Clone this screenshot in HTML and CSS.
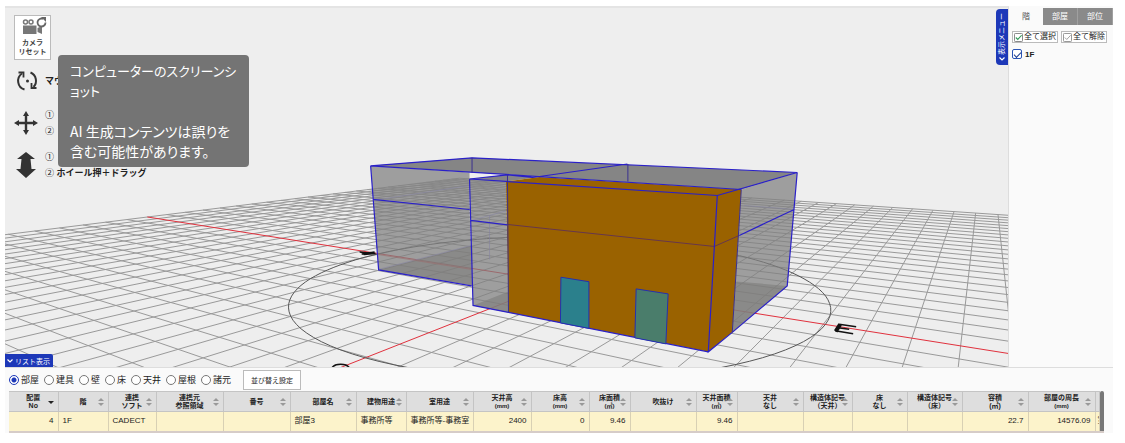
FILE: index.html
```
<!DOCTYPE html>
<html lang="ja">
<head>
<meta charset="utf-8">
<title>3Dビュー</title>
<link rel="stylesheet" href="styles.css">
</head>
<body>
<div class="app">
  <div class="workspace">
    <main class="viewport">
      <svg class="scene" viewBox="5 8 1004 360" preserveAspectRatio="xMidYMid slice" role="img" aria-label="建物の3D表示">
        <g id="grid" class="grid"></g>
        <g id="axes" class="axes"></g>
        <path id="compass" class="compass"></path>
        <path class="mark" d="M360 252.500L372 254M362 254.500L375 252.500M364 255L376 254"/>
        <path class="mark" d="M332 369Q334 365 341 365T350 369"/>
        <path class="mark" d="M857 327.500L840 325M854 334.500L836 331.500"/>
        <path class="mark mark-bold" d="M841 325L836.500 332"/>
        <path class="mark" d="M839 328.500L850 330"/>
        <path class="floor" d="M379 270.500L473 246L473 286ZM473.500 306L509 292V313ZM737 282L788 286.500L733 333Z"/>
        <path class="wall" d="M371 166.300L470 173V210L473 286L379 270.500Z"/>
        <path class="wall" d="M470 179.500L506.500 181.500L509 313L473.500 306Z"/>
        <path class="wall" d="M742 190L798 173L788 286.500L733 333Z"/>
        <path class="rim" d="M371 166.300L472.500 158.300L798 173L742 190Z"/>
        <path class="rim" d="M470 179.500L508 175.300L540 177.500L506.500 182Z"/>
        <path class="faint" d="M373 201L470 186M472 221L508 211M745 206L795 210M490 216V260M379 270L472 246"/>
        <path class="faint-axis" d="M378 255L472 270"/>
        <path class="orange" d="M506.500 182L540 177.500L742 190L733 333L709 352.500L509 313Z"/>
        <path class="orange-line" d="M508 225L550 229.500L715 247L740 236"/>
        <path class="edge" d="M371 166.300L472.500 158.300L798 173L718 196L470 179.500L508 175.300L533 178L628 164.500M371 166.300L742 190M371 166.300L379 270.500L472 286.500M470 179.500L473.500 306L509 313M373 199.800L470 210M471 221L508 225.500M798 173L788 286.500L733 333M740 236L795 210M718 196L709 352.500L733 333M709 352.500L509 313"/>
        <path class="inner-edge" d="M472.500 158.300V173M628.500 164.500V182M508 175.300V182L509 313M742 190L733 333"/>
        <path class="window-a" d="M561.500 277.800L589.500 282.300V329L561 323.500Z"/>
        <path class="window-b" d="M636.800 289.500L668.800 294.500L666.500 344.500L635.500 338.500Z"/>
      </svg>

      <div class="tools">
        <button class="camera" type="button">
          <svg viewBox="0 0 28 18" width="28" height="18" aria-hidden="true">
            <circle cx="6.500" cy="5" r="2" fill="none" stroke="#777" stroke-width="1.500"/>
            <circle cx="12" cy="5" r="2" fill="none" stroke="#777" stroke-width="1.500"/>
            <path d="M4 8.500H17.500V17H4ZM18.500 11L23 9V17L18.500 15Z" fill="#777"/>
            <path d="M24 1.800A4 4 0 1 0 26.500 5.500" fill="none" stroke="#666" stroke-width="1.800"/>
            <path d="M22 0H27V5Z" fill="#666"/>
          </svg>
          <span>カメラ</span><span>リセット</span>
        </button>
        <ul class="hints">
          <li>
            <svg viewBox="0 0 24 24" width="24" height="24" aria-hidden="true">
              <path d="M10.500 20.500A9 9 0 0 1 8 4.500M16.500 3.500A9 9 0 0 1 19.500 18" fill="none" stroke="#333" stroke-width="2"/>
              <path d="M4.500 3.500H9.500V8.500M22.500 19H17.500V14" fill="none" stroke="#333" stroke-width="1.800"/>
              <circle cx="13.500" cy="12" r="1.500" fill="#333"/>
            </svg>
            <p>マウ</p>
          </li>
          <li>
            <svg viewBox="0 0 24 24" width="24" height="24" aria-hidden="true">
              <path d="M12 3V21M3 12H21" stroke="#333" stroke-width="2.400"/>
              <path d="M12 0L15 5H9ZM12 24L9 19H15ZM0 12L5 9V15ZM24 12L19 15V9Z" fill="#333"/>
            </svg>
            <p><i>①</i><br><i>②</i></p>
          </li>
          <li>
            <svg viewBox="0 0 24 28" width="24" height="28" aria-hidden="true">
              <path d="M12 1L21 8H16.500L17.500 18H22L12 27L2 18H6.500L7.500 8H3Z" fill="#333"/>
            </svg>
            <p><i>①</i><br><i>②</i> ホイール押＋ドラッグ</p>
          </li>
        </ul>
      </div>

      <div class="tooltip" role="tooltip">
        <p class="tip-title">コンピューターのスクリーンシ<br>ョット</p>
        <p>AI 生成コンテンツは誤りを<br>含む可能性があります。</p>
      </div>
      <button class="menu-toggle" type="button">
        <svg viewBox="0 0 6 4" width="6" height="4" aria-hidden="true"><path d="M.5 3.500L3 1L5.500 3.500" fill="none" stroke="#fff" stroke-width="1.200"/></svg>
        <span>表示メニュー</span>
      </button>
      <button class="list-toggle" type="button">
        <svg viewBox="0 0 6 4" width="6" height="4" aria-hidden="true"><path d="M.5 .5L3 3L5.500 .5" fill="none" stroke="#fff" stroke-width="1.200"/></svg>
        リスト表示
      </button>
    </main>

    <aside class="side">
      <nav class="tabs">
        <button class="tab active" type="button">階</button>
        <button class="tab" type="button">部屋</button>
        <button class="tab" type="button">部位</button>
      </nav>
      <div class="side-actions">
        <button type="button">
          <svg viewBox="0 0 10 10" width="9" height="9" aria-hidden="true"><rect x=".5" y=".5" width="9" height="9" rx="1" fill="#fff" stroke="#777"/><path d="M2 5L4.200 7.200L8.500 2.500" fill="none" stroke="#2f9a55" stroke-width="1.200"/></svg>全て選択
        </button>
        <button type="button">
          <svg viewBox="0 0 10 10" width="9" height="9" aria-hidden="true"><rect x=".5" y=".5" width="9" height="9" rx="1" fill="#fff" stroke="#888"/><path d="M2 5L4.200 7.200L8.500 2.500" fill="none" stroke="#999"/></svg>全て解除
        </button>
      </div>
      <label class="floor-check"><input type="checkbox" checked><span>1F</span></label>
    </aside>
  </div>

  <section class="list">
    <form class="filters">
      <label><input type="radio" name="kind" checked>部屋</label>
      <label><input type="radio" name="kind">建具</label>
      <label><input type="radio" name="kind">壁</label>
      <label><input type="radio" name="kind">床</label>
      <label><input type="radio" name="kind">天井</label>
      <label><input type="radio" name="kind">屋根</label>
      <label><input type="radio" name="kind">諸元</label>
      <button type="button">並び替え設定</button>
    </form>
    <div class="table-wrap">
      <table>
        <colgroup>
          <col class="w49"><col class="w50"><col class="w48"><col class="w67"><col class="w67"><col class="w66"><col class="w50"><col class="w67"><col class="w58"><col class="w58"><col class="w41"><col class="w66"><col class="w41"><col class="w66"><col class="w49"><col class="w55"><col class="w55"><col class="w66"><col class="w67"><col>
        </colgroup>
        <thead>
          <tr>
            <th class="sorted">配置<br>No</th><th>階</th><th>連携<br>ソフト</th><th>連携元<br>参照領域</th><th>番号</th><th>部屋名</th><th>建物用途</th><th>室用途</th><th>天井高<br><small>(mm)</small></th><th>床高<br><small>(mm)</small></th><th>床面積<br><small>(㎡)</small></th><th>吹抜け</th><th>天井面積<br><small>(㎡)</small></th><th>天井<br>なし</th><th>構造体記号<br>（天井）</th><th>床<br>なし</th><th>構造体記号<br>（床）</th><th>容積<br>(㎥)</th><th>部屋の周長<br><small>(mm)</small></th><th class="cut"></th>
          </tr>
        </thead>
        <tbody>
          <tr>
            <td class="num">4</td><td>1F</td><td>CADECT</td><td></td><td></td><td>部屋3</td><td>事務所等</td><td>事務所等-事務室</td><td class="num">2400</td><td class="num">0</td><td class="num">9.46</td><td></td><td class="num">9.46</td><td></td><td></td><td></td><td></td><td class="num">22.7</td><td class="num">14576.09</td><td>室</td>
          </tr>
        </tbody>
      </table>
      <div class="scrollbar"></div>
    </div>
  </section>
</div>
<script src="scene.js"></script>
</body>
</html>
```
FILE: styles.css
```
* { box-sizing: border-box; }
body {
  margin: 0;
  background: #fff;
  color: #222;
  font-family: "Liberation Sans", "Noto Sans CJK JP", sans-serif;
}
button, input { font: inherit; color: inherit; margin: 0; }
p, ul { margin: 0; padding: 0; }
ul { list-style: none; }

.app { margin: 6px 12px 0 5px; }
.workspace { display: flex; height: 362px; border-bottom: 1px solid #ddd; }
.viewport {
  position: relative;
  flex: 1;
  min-width: 0;
  overflow: hidden;
  background: #eee;
  border-top: 2px solid #e4e4e4;
  border-right: 1px solid #ddd;
}
.scene { position: absolute; inset: 0; width: 100%; height: 100%; }
.scene path, .scene line { fill: none; }
.grid line { stroke: #999; stroke-width: 1; }
.axes line { stroke: #e0303c; stroke-width: 1; }
.compass { stroke: #555; }
.mark { stroke: #111; stroke-width: 1.500; }
.scene .mark-bold { stroke-width: 4; }
.scene .floor { fill: #77736c; fill-opacity: .6; }
.scene .wall { fill: #808080; fill-opacity: .72; }
.scene .rim { fill: #858585; }
.faint { stroke: #8583a0; stroke-width: 1; stroke-opacity: .6; }
.faint-axis { stroke: #9a6c6c; stroke-opacity: .6; }
.scene .orange { fill: #9a6200; }
.orange-line { stroke: #66364c; }
.edge { stroke: #2a20c8; stroke-width: 1.200; }
.inner-edge { stroke: #3a3090; }
.scene .window-a { fill: #2b808c; stroke: #2430b0; }
.scene .window-b { fill: #4a7d6b; stroke: #2430b0; }

.tools { position: relative; padding: 7px 0 0 9px; }
.camera {
  display: flex;
  flex-direction: column;
  align-items: center;
  width: 37px;
  height: 45px;
  padding: 1px 0 0;
  border: 1px solid #bbb;
  background: #fff;
  color: #444;
  font-size: 7px;
  font-weight: 700;
  line-height: 9px;
}
.camera svg { margin-bottom: 3px; }
.hints { display: grid; gap: 8px; margin-top: 4px; }
.hints li { display: flex; align-items: center; gap: 7px; height: 34px; }
.hints li svg { flex: none; }
.hints p { font-size: 9px; line-height: 16px; font-weight: 700; white-space: nowrap; }
.hints i { font-style: normal; font-weight: 400; }

.tooltip {
  position: absolute;
  left: 53px;
  top: 47px;
  width: 191px;
  padding: 6px 10px 6px 12px;
  border-radius: 4px;
  background: #747474;
  color: #fff;
  font-family: "Noto Sans CJK JP", sans-serif;
  font-size: 14px;
  line-height: 20px;
  font-feature-settings: "palt";
  white-space: nowrap;
}
.tooltip .tip-title { font-size: 13px; }
.tooltip p + p { margin-top: 20px; }

.menu-toggle {
  position: absolute;
  right: 0;
  top: 1px;
  display: flex;
  flex-direction: column-reverse;
  align-items: center;
  justify-content: center;
  gap: 2px;
  width: 12px;
  height: 56px;
  padding: 0;
  border: 0;
  border-radius: 4px 0 0 4px;
  background: #1d38b8;
  color: #fff;
  font-size: 7px;
  line-height: 12px;
}
.menu-toggle svg { transform: rotate(180deg); }
.menu-toggle span {
  display: block;
  writing-mode: vertical-rl;
  text-orientation: sideways;
  transform: rotate(180deg);
  white-space: nowrap;
}
.list-toggle {
  position: absolute;
  left: 0;
  bottom: 0;
  display: flex;
  align-items: center;
  gap: 2px;
  height: 13px;
  padding: 0 3px 0 2px;
  border: 0;
  border-radius: 0 2px 0 0;
  background: #1d38b8;
  color: #fff;
  font-size: 7px;
}

.side { width: 104px; flex: none; padding-top: 2px; background: #fafafa; }
.tabs { display: flex; height: 17px; }
.tab {
  flex: 1;
  padding: 0;
  border: 0;
  border-right: 1px solid #a0a0a0;
  background: #8a8a8a;
  color: #fff;
  font-size: 8px;
  line-height: 16px;
}
.tab.active { background: #fafafa; color: #555; border: 0; }
.side-actions { display: flex; justify-content: space-between; padding: 6px 6px 0 3px; }
.side-actions button {
  display: flex;
  align-items: center;
  gap: 1px;
  height: 12px;
  padding: 0 1px;
  border: 1px solid #bbb;
  background: #fff;
  color: #222;
  font-size: 8px;
  line-height: 10px;
  white-space: nowrap;
}
.floor-check {
  display: flex;
  align-items: center;
  gap: 3px;
  padding: 6px 3px;
  font-size: 8px;
  font-weight: 700;
}
.floor-check input {
  appearance: none;
  width: 10px;
  height: 10px;
  border: 1px solid #2b55b5;
  border-radius: 2px;
  background: #fff;
  display: grid;
  place-items: center;
}
.floor-check input:checked::before {
  content: "";
  width: 6px;
  height: 3px;
  border: solid #1c3c90;
  border-width: 0 0 1px 1px;
  transform: rotate(-45deg);
}

.list { background: #fafafa; padding: 1px 9px 0 4px; }
.filters { display: flex; align-items: center; gap: 5px; height: 22px; }
.filters label { display: flex; align-items: center; gap: 2px; font-size: 9px; line-height: 12px; }
.filters input {
  appearance: none;
  width: 10px;
  height: 10px;
  border: 1px solid #777;
  border-radius: 50%;
  background: #fff;
}
.filters input:checked {
  border-color: #1d38b8;
  background: radial-gradient(circle, #1d38b8 0 2px, #fff 3px);
}
.filters button {
  height: 20px;
  margin-left: 7px;
  padding: 0 7px;
  border: 1px solid #bbb;
  background: #fff;
  font-size: 7px;
}

.table-wrap { display: flex; overflow: hidden; height: 42px; border-bottom: 2px solid #d6ccc8; }
table { flex: 1; width: 100%; height: 40px; table-layout: fixed; border-collapse: collapse; }
.w41 { width: 41px; } .w48 { width: 48px; } .w49 { width: 49px; } .w50 { width: 50px; }
.w55 { width: 55px; } .w58 { width: 58px; } .w66 { width: 66px; } .w67 { width: 67px; }
th {
  position: relative;
  height: 20px;
  padding: 0;
  border: 1px solid #c4c4c4;
  border-left-width: 0;
  background: #dedede;
  font-size: 7px;
  line-height: 8px;
  white-space: nowrap;
}
th small { font-size: 6px; }
th::before, th::after {
  content: "";
  position: absolute;
  right: 4px;
  border: 3px solid transparent;
}
th::before { top: 3px; border-bottom-color: #999; }
th::after { top: 11px; border-top-color: #999; }
th.sorted::before, th.cut::before, th.cut::after { display: none; }
th.sorted::after { top: 9px; border-top-color: #222; }
td {
  height: 20px;
  padding: 0 4px 2px;
  border-right: 1px solid #d8d0b4;
  background: #fcf3cb;
  font-size: 8px;
  line-height: 12px;
  white-space: nowrap;
  overflow: hidden;
}
.num { text-align: right; }
td:last-child { padding: 0 0 2px 2px; }
.scrollbar { flex: none; width: 4px; border-radius: 2px 2px 0 0; background: #777; }
```
FILE: scene.js
```
// Perspective ground plane: a 50 x 50 cell grid with axes and a compass ring.
const CELLS = 25;
const STEP_WEST = 0.0249;
const STEP_NORTH = 0.0384;
const NEAR = 0.2;

const depth = (u, v) => 1 + STEP_WEST * u + STEP_NORTH * v;

function project(u, v) {
  const w = depth(u, v);
  const x = (558 - 512 * STEP_WEST * u + 988 * STEP_NORTH * v) / w;
  const y = 113 + 169.6 / w;
  return [x, y];
}

function addLine(group, a, b) {
  const wa = depth(...a);
  const wb = depth(...b);
  if (wa < NEAR && wb < NEAR) return;
  const cut = (p, wp, q, wq) => {
    const t = (NEAR - wp) / (wq - wp);
    return [p[0] + (q[0] - p[0]) * t, p[1] + (q[1] - p[1]) * t];
  };
  const start = wa < NEAR ? cut(a, wa, b, wb) : a;
  const end = wb < NEAR ? cut(b, wb, a, wa) : b;
  const [x1, y1] = project(...start);
  const [x2, y2] = project(...end);
  const line = document.createElementNS("http://www.w3.org/2000/svg", "line");
  Object.entries({ x1, y1, x2, y2 }).forEach(([k, n]) => line.setAttribute(k, n.toFixed(1)));
  group.appendChild(line);
}

const grid = document.getElementById("grid");
const axes = document.getElementById("axes");
for (let i = -CELLS; i <= CELLS; i++) {
  const group = i === 0 ? axes : grid;
  addLine(group, [i, -CELLS], [i, i === 0 ? 0 : CELLS]);
  addLine(group, [-CELLS, i], [CELLS, i]);
}

const ring = [];
for (let a = 0; a < 360; a += 3) {
  const r = (a * Math.PI) / 180;
  const [x, y] = project(8.05 * Math.cos(r), 8.05 * Math.sin(r));
  ring.push(`${x.toFixed(1)} ${y.toFixed(1)}`);
}
document.getElementById("compass").setAttribute("d", `M${ring.join("L")}Z`);
```
